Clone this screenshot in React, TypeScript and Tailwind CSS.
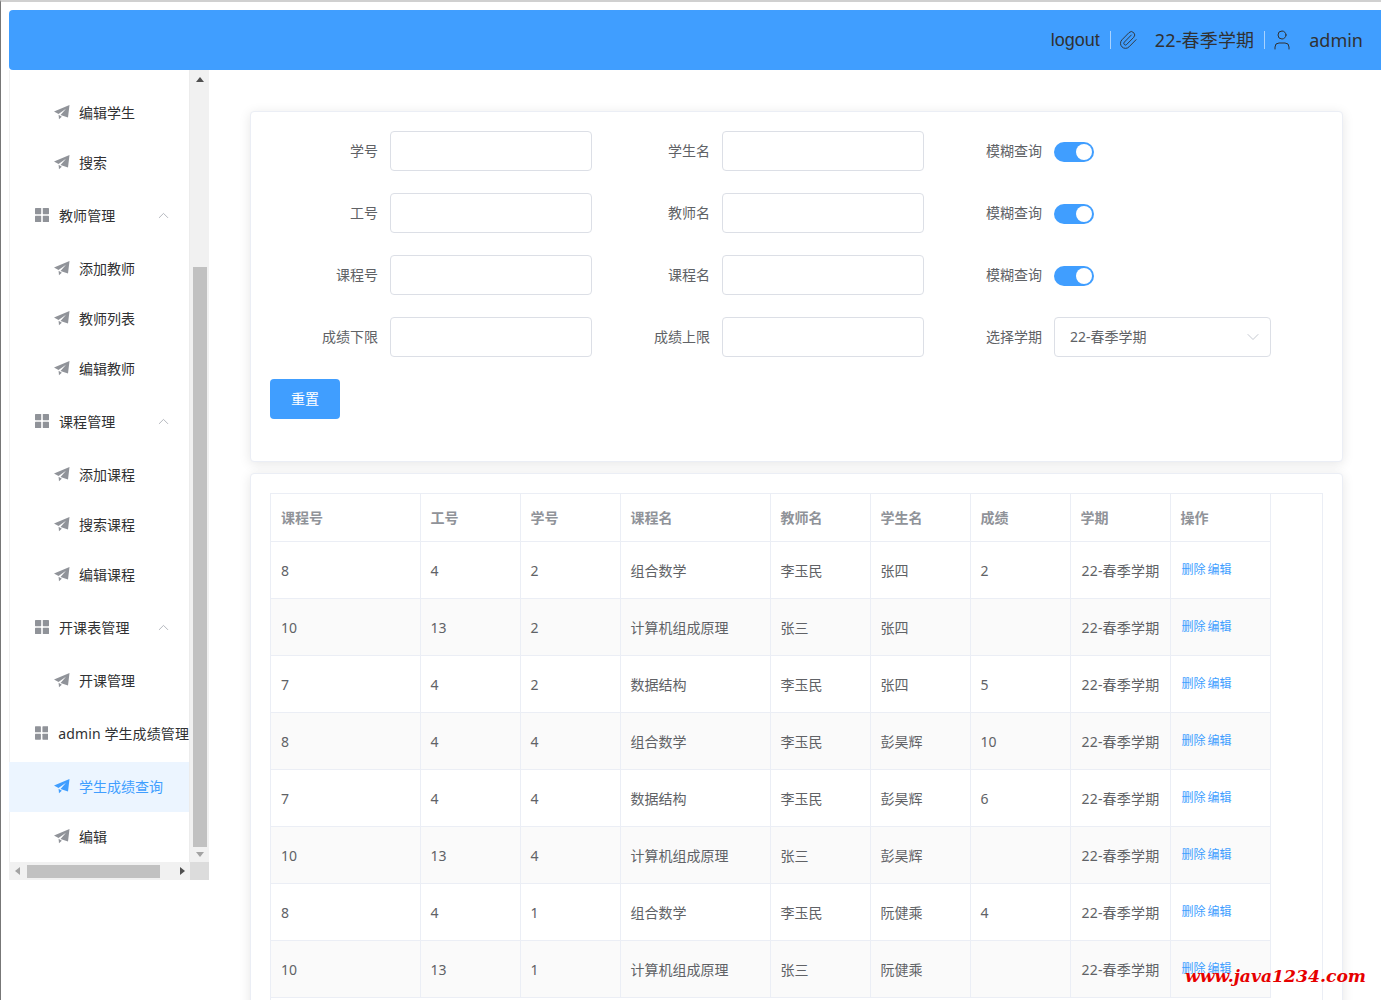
import React from "react";
import { ChevronDown, ChevronUp, Paperclip, User } from "lucide-react";

const font = "font-['Noto_Sans','Noto_Sans_CJK_SC',sans-serif]";

function Plane({ active }: { active?: boolean }) {
  return (
    <svg viewBox="0 0 16 16" className={active ? "w-4 h-4 fill-[#409eff]" : "w-4 h-4 fill-[#909399]"}>
      <path d="M15.5 1 0 7.5 4.5 10 12 4.8 6.5 11 14 13.5Z" />
      <path d="M4.6 10.8 5 15.2 7.8 12.7Z" />
    </svg>
  );
}

function Grid() {
  return (
    <svg viewBox="0 0 14 14" className="w-[14px] h-[14px] fill-[#909399]">
      <rect x="0" y="0" width="6.2" height="6.2" rx="0.6" />
      <rect x="7.8" y="0" width="6.2" height="6.2" rx="0.6" />
      <rect x="0" y="7.8" width="6.2" height="6.2" rx="0.6" />
      <rect x="7.8" y="7.8" width="6.2" height="6.2" rx="0.6" />
    </svg>
  );
}

function Item({ label, active }: { label: string; active?: boolean }) {
  return (
    <div className={`h-[50px] flex items-center pl-[45px] pb-[2px] gap-[9px] text-[14px] ${active ? "bg-[#ecf5ff] text-[#409eff]" : "text-[#303133]"}`}>
      <Plane active={active} />
      <span>{label}</span>
    </div>
  );
}

function Group({ label, arrow = true }: { label: string; arrow?: boolean }) {
  return (
    <div className="h-[56px] flex items-center pl-[26px] pb-[2px] text-[14px] text-[#303133] whitespace-nowrap">
      <Grid />
      <span className="ml-[10px] tracking-[0.1px]">{label}</span>
      {arrow && <ChevronUp className="w-[17px] h-[17px] text-[#a8abb2] ml-auto mr-[17px]" strokeWidth={1.2} />}
    </div>
  );
}

function Sidebar() {
  return (
    <aside className="w-[200px] h-[810px] shrink-0 flex flex-col bg-white">
      <div className="flex flex-1 min-h-0">
        <div className="w-[181px] overflow-hidden pt-[18px] border-r border-[#ececec] shadow-[inset_1px_0_0_#f0f0f0]">
          <Item label="编辑学生" />
          <Item label="搜索" />
          <Group label="教师管理" />
          <Item label="添加教师" />
          <Item label="教师列表" />
          <Item label="编辑教师" />
          <Group label="课程管理" />
          <Item label="添加课程" />
          <Item label="搜索课程" />
          <Item label="编辑课程" />
          <Group label="开课表管理" />
          <Item label="开课管理" />
          <Group label="admin 学生成绩管理" arrow={false} />
          <Item label="学生成绩查询" active />
          <Item label="编辑" />
        </div>
        <div className="w-[19px] bg-[#f1f1f1] flex flex-col items-center pt-[7px]">
          <div className="w-0 h-0 border-x-[4px] border-x-transparent border-b-[5px] border-b-[#505050]" />
          <div className="w-[14px] h-[580px] bg-[#c1c1c1] mt-[185px] shrink-0" />
          <div className="w-0 h-0 mt-[5px] border-x-[4px] border-x-transparent border-t-[5px] border-t-[#a3a3a3]" />
        </div>
      </div>
      <div className="h-[18px] flex bg-[#f1f1f1] shrink-0">
        <div className="w-[181px] flex items-center">
          <div className="ml-[6px] w-0 h-0 border-y-[4px] border-y-transparent border-r-[5px] border-r-[#a3a3a3]" />
          <div className="ml-[7px] w-[133px] h-[13px] bg-[#c1c1c1]" />
          <div className="ml-[20px] w-0 h-0 border-y-[4px] border-y-transparent border-l-[5px] border-l-[#505050]" />
        </div>
        <div className="w-[19px] bg-[#dcdcdc]" />
      </div>
    </aside>
  );
}

function Field({ label, children }: { label: string; children: React.ReactNode }) {
  return (
    <div className="flex items-center">
      <label className="w-[120px] pr-3 pb-[2px] text-right text-[14px] text-[#606266]">{label}</label>
      {children}
    </div>
  );
}

function TextInput() {
  return <input className="w-[202px] h-10 border border-[#dcdfe6] rounded bg-white outline-none" />;
}

function Switch() {
  return (
    <div className="w-10 h-5 mt-[2px] rounded-full bg-[#409eff] relative">
      <div className="absolute right-[2px] top-[2px] w-4 h-4 rounded-full bg-white" />
    </div>
  );
}

const formRows = [
  ["学号", "学生名"],
  ["工号", "教师名"],
  ["课程号", "课程名"],
];

function FilterCard() {
  return (
    <section className="h-[351px] border border-[#ebeef5] rounded bg-white shadow-[0_2px_12px_0_rgba(0,0,0,0.1)] pt-[19px] pl-[19px]">
      <div className="flex flex-col gap-[22px]">
        {formRows.map(([a, b]) => (
          <div key={a} className="flex gap-[10px]">
            <Field label={a}><TextInput /></Field>
            <Field label={b}><TextInput /></Field>
            <Field label="模糊查询"><Switch /></Field>
          </div>
        ))}
        <div className="flex gap-[10px]">
          <Field label="成绩下限"><TextInput /></Field>
          <Field label="成绩上限"><TextInput /></Field>
          <Field label="选择学期">
            <div className="w-[217px] h-10 border border-[#dcdfe6] rounded flex items-center justify-between pl-[15px] pr-[7px] text-[14px] text-[#606266]">
              <span className="pb-[2px]">22-春季学期</span>
              <ChevronDown className="w-5 h-5 text-[#c0c4cc]" strokeWidth={1.1} />
            </div>
          </Field>
        </div>
      </div>
      <button className="mt-[22px] w-[70px] h-10 pb-[2px] rounded bg-[#409eff] text-white text-[14px]">重置</button>
    </section>
  );
}

const colWidths = ["w-[149px]", "w-[100px]", "w-[100px]", "w-[150px]", "w-[100px]", "w-[100px]", "w-[100px]", "w-[100px]", "w-[100px]"];
const head = ["课程号", "工号", "学号", "课程名", "教师名", "学生名", "成绩", "学期", "操作"];
const rows = [
  ["8", "4", "2", "组合数学", "李玉民", "张四", "2"],
  ["10", "13", "2", "计算机组成原理", "张三", "张四", ""],
  ["7", "4", "2", "数据结构", "李玉民", "张四", "5"],
  ["8", "4", "4", "组合数学", "李玉民", "彭昊辉", "10"],
  ["7", "4", "4", "数据结构", "李玉民", "彭昊辉", "6"],
  ["10", "13", "4", "计算机组成原理", "张三", "彭昊辉", ""],
  ["8", "4", "1", "组合数学", "李玉民", "阮健乘", "4"],
  ["10", "13", "1", "计算机组成原理", "张三", "阮健乘", ""],
];

function TableCard() {
  return (
    <section className="mt-[11px] h-[600px] border border-[#ebeef5] rounded bg-white shadow-[0_2px_12px_0_rgba(0,0,0,0.1)] pt-[19px] px-[19px]">
      <div className="w-[1053px] h-full border-l border-t border-r border-[#ebeef5]">
        <table className="table-fixed border-collapse w-[999px] text-[14px]">
          <colgroup>
            {colWidths.map((w, i) => <col key={i} className={w} />)}
          </colgroup>
          <thead>
            <tr className="h-[47px]">
              {head.map((h) => (
                <th key={h} className="text-left font-bold pl-[10px] text-[#909399] border-r border-b border-[#ebeef5]">{h}</th>
              ))}
            </tr>
          </thead>
          <tbody>
            {rows.map((r, i) => (
              <tr key={i} className={`h-[57px] ${i % 2 ? "bg-[#fafafa]" : "bg-white"}`}>
                {r.map((c, j) => (
                  <td key={j} className="pl-[10px] pt-[1px] text-[#606266] border-r border-b border-[#ebeef5]">{c}</td>
                ))}
                <td className="pl-[11px] pt-[1px] text-[#606266] border-r border-b border-[#ebeef5] whitespace-nowrap tracking-[0.2px]">22-春季学期</td>
                <td className="pl-[11px] pt-[1px] text-[12px] text-[#409eff] border-r border-b border-[#ebeef5] [word-spacing:-1px]">删除 编辑</td>
              </tr>
            ))}
          </tbody>
        </table>
      </div>
    </section>
  );
}

export default function App() {
  return (
    <div className={`${font} relative h-[1000px] overflow-hidden bg-white border-l border-[#777] border-t-2 border-t-[#d0d0d0]`}>
      <div className="pl-2 pt-2">
        <header className="h-[60px] bg-[#409eff] rounded-tl rounded-bl flex items-center justify-end pr-[18px] text-[18px] text-[#303133]">
          <span className="font-['Liberation_Sans',sans-serif]">logout</span>
          <span className="w-px h-[18px] bg-[#a9d3ff] ml-[10px]" />
          <Paperclip className="w-5 h-5 ml-[7px]" strokeWidth={1.1} />
          <span className="ml-[17px] tracking-[0.15px]">22-春季学期</span>
          <span className="w-px h-[18px] bg-[#a9d3ff] ml-[10px]" />
          <User className="w-6 h-6 ml-[5px]" strokeWidth={1} />
          <span className="ml-[15px]">admin</span>
        </header>
        <div className="flex">
          <Sidebar />
          <main className="w-[1093px] ml-[41px] pt-[41px] shrink-0">
            <FilterCard />
            <TableCard />
          </main>
        </div>
      </div>
      <div className="absolute left-[1184px] top-[962px] font-['DejaVu_Serif',serif] font-bold italic text-[17.2px] text-[#e60000] [text-shadow:0_0_1px_#fff] whitespace-nowrap">
        www.java1234.com
      </div>
    </div>
  );
}
